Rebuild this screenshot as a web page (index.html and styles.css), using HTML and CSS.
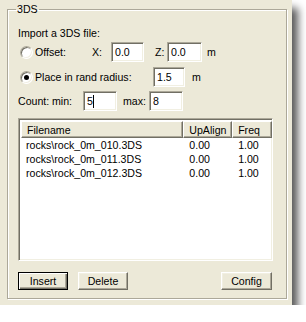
FILE: index.html
```html
<!DOCTYPE html>
<html lang="en">
<head>
    <meta charset="UTF-8">
    <title>3DS</title>
    <link rel="stylesheet" href="styles.css">
</head>
<body>
    <div class="panel">
        <fieldset class="group">
            <legend>3DS</legend>
            <div class="caption">Import a 3DS file:</div>
            <div class="row">
                <span class="radio"></span>
                <span class="lbl w-offset">Offset:</span>
                <span class="lbl w-x">X:</span>
                <div class="field w33">0.0</div>
                <span class="lbl w-z">Z:</span>
                <div class="field w35">0.0</div>
                <span class="unit">m</span>
            </div>
            <div class="row row-place">
                <span class="radio checked"></span>
                <span class="lbl w-place">Place in rand radius:</span>
                <div class="field w32">1.5</div>
                <span class="unit u-place">m</span>
            </div>
            <div class="row row-count">
                <span class="lbl w-count">Count:</span>
                <span class="lbl w-min">min:</span>
                <div class="field w34">5<span class="caret"></span></div>
                <span class="lbl w-max">max:</span>
                <div class="field w34">8</div>
            </div>
            <div class="list">
                <div class="list-head">
                    <div class="col c-name">Filename</div>
                    <div class="col c-up">UpAlign</div>
                    <div class="col c-freq">Freq</div>
                </div>
                <div class="list-row">
                    <div class="cell c-name">rocks\rock_0m_010.3DS</div>
                    <div class="cell c-up">0.00</div>
                    <div class="cell c-freq">1.00</div>
                </div>
                <div class="list-row">
                    <div class="cell c-name">rocks\rock_0m_011.3DS</div>
                    <div class="cell c-up">0.00</div>
                    <div class="cell c-freq">1.00</div>
                </div>
                <div class="list-row">
                    <div class="cell c-name">rocks\rock_0m_012.3DS</div>
                    <div class="cell c-up">0.00</div>
                    <div class="cell c-freq">1.00</div>
                </div>
            </div>
            <div class="buttons">
                <button type="button" class="btn default">Insert</button>
                <button type="button" class="btn">Delete</button>
                <button type="button" class="btn right">Config</button>
            </div>
        </fieldset>
    </div>
</body>
</html>
```

FILE: styles.css
```css
body { margin: 0; background: #fff; font: 10.6px "Liberation Sans", Arial, sans-serif; color: #000; }
.panel { width: 292px; height: 305px; background: #ECE9D8; box-shadow: 6px 8px 8px rgba(0,0,0,0.65); padding: 3px 0 0 7px; box-sizing: border-box; }
.group { margin: 0; width: 280px; height: 296px; box-sizing: border-box; padding: 0 10px; border: 1px solid #ACA899; box-shadow: inset 1px 1px 0 #fff, 1px 1px 0 #fff; }
.group legend { padding: 0 1px; margin-left: -2px; line-height: 13px; }
.caption { margin-top: 11px; line-height: 13px; }
.row { display: flex; align-items: center; height: 20px; margin-top: 2px; line-height: 13px; }
.row-place { margin-top: 5px; }
.row-count { margin-top: 4px; }
.radio { width: 13px; height: 13px; box-sizing: border-box; border-radius: 50%; background: #fff; border: 1px solid; border-color: #ACA899 #fff #fff #ACA899; box-shadow: inset 1px 1px 0 #716F64, inset -1px -1px 0 #F1EFE2; margin: 0 2px 0 2px; position: relative; flex: none; }
.radio.checked::after { content: ""; position: absolute; left: 3px; top: 3px; width: 5px; height: 5px; border-radius: 50%; background: #000; }
.lbl { flex: none; }
.w-offset { width: 57px; }
.w-x { width: 19px; }
.w-z { width: 12px; margin-left: 11px; }
.w-place { width: 118px; }
.w-count { width: 34px; }
.w-min { width: 31px; }
.w-max { width: 26px; margin-left: 6px; }
.unit { margin-left: 5px; }
.u-place { margin-left: 7px; }
.field { height: 20px; box-sizing: border-box; background: #fff; border: 1px solid; border-color: #ACA899 #fff #fff #ACA899; box-shadow: inset 1px 1px 0 #716F64, inset -1px -1px 0 #F1EFE2; padding: 3px 0 0 3px; line-height: 13px; flex: none; }
.w32 { width: 32px; }
.w33 { width: 33px; }
.w34 { width: 34px; }
.w35 { width: 35px; }
.caret { display: inline-block; width: 1px; height: 13px; background: #000; vertical-align: top; }
.list { margin-top: 7px; width: 255px; height: 143px; box-sizing: border-box; background: #fff; border: 1px solid; border-color: #ACA899 #fff #fff #ACA899; box-shadow: inset 1px 1px 0 #716F64, inset -1px -1px 0 #F1EFE2; padding: 2px 0 0 2px; }
.list-head { display: flex; height: 17px; }
.col { box-sizing: border-box; height: 17px; background: #ECE9D8; border: 1px solid; border-color: #fff #716F64 #716F64 #fff; box-shadow: inset -1px -1px 0 #ACA899; padding: 2px 0 0 5px; line-height: 13px; }
.c-name { width: 163px; }
.c-up { width: 49px; }
.c-freq { width: 40px; }
.list-row { display: flex; height: 14px; line-height: 14px; }
.cell { box-sizing: border-box; padding-left: 5px; }
.list-row .c-up, .list-row .c-freq { padding-left: 6px; }
.buttons { display: flex; margin-top: 11px; gap: 10px; }
.btn { width: 50px; height: 18px; box-sizing: border-box; margin: 0; padding: 0; font: inherit; color: #000; background: #ECE9D8; border: 1px solid; border-color: #fff #716F64 #716F64 #fff; box-shadow: inset -1px -1px 0 #ACA899, inset 1px 1px 0 #F1EFE2; }
.btn.default { border-color: #000; box-shadow: inset 1px 1px 0 #fff, inset -1px -1px 0 #716F64, inset -2px -2px 0 #ACA899; }
.btn.right { width: 51px; margin-left: auto; margin-right: 4px; }
```
